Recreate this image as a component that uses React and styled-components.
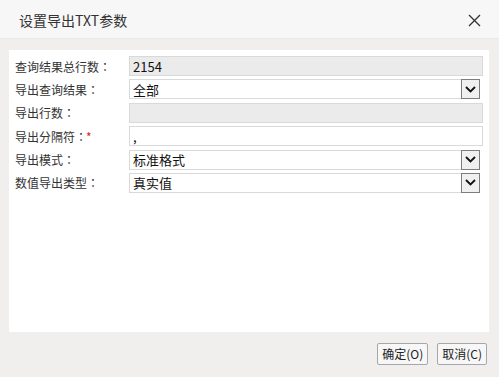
import React from "react";
import styled, { createGlobalStyle } from "styled-components";

const GlobalStyle = createGlobalStyle`
  html, body {
    margin: 0;
    padding: 0;
    background: #f0efed;
  }
  body {
    font-family: "Noto Sans CJK SC", "Noto Sans", sans-serif;
  }
`;

const Dialog = styled.div`
  width: 499px;
  height: 377px;
  background: #f0efed;
  display: flex;
  flex-direction: column;
`;

const Header = styled.div`
  height: 38px;
  flex: none;
  background: #f7f7f7;
  border-bottom: 1px solid #e9e9e9;
  display: flex;
  align-items: center;
  justify-content: space-between;
  padding: 0 18px 0 19px;
`;

const Title = styled.div`
  font-size: 14px;
  color: #333;
  margin-top: 2px;
`;

const CloseButton = styled.div`
  width: 13px;
  height: 13px;
  display: flex;
  margin-top: 2px;
  cursor: pointer;
`;

const Panel = styled.div`
  margin: 11px 10px 0 9px;
  height: 282px;
  background: #fff;
  padding: 6px 0 0 6px;
  box-sizing: border-box;
`;

const Form = styled.div`
  display: grid;
  grid-template-columns: 114px auto;
  grid-auto-rows: 20px;
  row-gap: 3.4px;
`;

const Label = styled.div`
  font-size: 12px;
  color: #333;
  display: flex;
  align-items: center;
  white-space: nowrap;
`;

/* centred full-width colon, as the original font draws it */
const Colon = styled.span`
  font-family: "Noto Sans CJK TC", "Noto Sans CJK SC", sans-serif;
`;

const Star = styled.span`
  color: #e02020;
  margin-left: -1px;
`;

const Field = styled.div`
  width: ${(p) => p.$width}px;
  height: 20px;
  box-sizing: border-box;
  border: 1px solid #d9d9d9;
  background: ${(p) => (p.$readOnly ? "#ebebeb" : "#fff")};
  font-size: 13px;
  color: #111;
  display: flex;
  align-items: center;
  padding-left: 3px;
  position: relative;
`;

const ArrowBox = styled.div`
  position: absolute;
  right: -1px;
  top: -1px;
  width: 19px;
  height: 20px;
  box-sizing: border-box;
  border: 1px solid #7d7d7d;
  background: #f0f0f0;
  display: flex;
  align-items: center;
  justify-content: center;
`;

const Footer = styled.div`
  display: flex;
  justify-content: flex-end;
  gap: 9px;
  padding: 11px 12px 0 0;
`;

const Button = styled.button`
  height: 22px;
  box-sizing: border-box;
  border: 1px solid #a7a7a7;
  border-radius: 2px;
  background: #f7f7f7;
  font-family: "Noto Sans CJK SC", "Noto Sans", sans-serif;
  font-size: 12px;
  color: #222;
  padding: 0 4px;
  line-height: 18px;
`;

const Chevron = () => (
  <svg width="11" height="7" viewBox="0 0 11 7">
    <path d="M1 1 L5.5 5.5 L10 1" fill="none" stroke="#111" strokeWidth="1.8" />
  </svg>
);

const rows = [
  { label: "查询结果总行数", value: "2154", readOnly: true },
  { label: "导出查询结果", value: "全部", select: true },
  { label: "导出行数", value: "", readOnly: true },
  { label: "导出分隔符", value: ",", required: true },
  { label: "导出模式", value: "标准格式", select: true },
  { label: "数值导出类型", value: "真实值", select: true },
];

export default function App() {
  return (
    <Dialog>
      <GlobalStyle />
      <Header>
        <Title>设置导出TXT参数</Title>
        <CloseButton>
          <svg width="13" height="13" viewBox="0 0 13 13">
            <path d="M1 1 L12 12 M12 1 L1 12" stroke="#333" strokeWidth="1.3" fill="none" />
          </svg>
        </CloseButton>
      </Header>
      <Panel>
        <Form>
          {rows.map((r) => (
            <React.Fragment key={r.label}>
              <Label>
                {r.label}
                <Colon>：</Colon>
                {r.required && <Star>*</Star>}
              </Label>
              <Field $width={r.select ? 351 : 354} $readOnly={r.readOnly}>
                {r.value}
                {r.select && (
                  <ArrowBox>
                    <Chevron />
                  </ArrowBox>
                )}
              </Field>
            </React.Fragment>
          ))}
        </Form>
      </Panel>
      <Footer>
        <Button>确定(O)</Button>
        <Button>取消(C)</Button>
      </Footer>
    </Dialog>
  );
}
